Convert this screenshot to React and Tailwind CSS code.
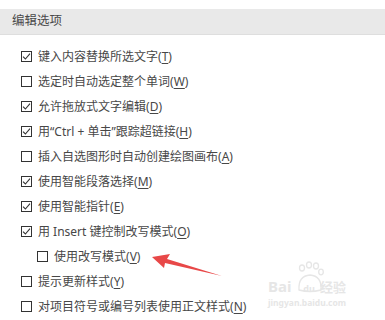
import React from "react";

const Check = ({ checked }) => (
  <span className="w-[11px] h-[11px] border border-[#333] bg-white flex-none flex items-center justify-center">
    {checked && (
      <svg width="9" height="9" viewBox="0 0 9 9">
        <path d="M1 4.6 L3.4 7 L8 1.6" fill="none" stroke="#333" strokeWidth="1.1" />
      </svg>
    )}
  </span>
);

const rows = [
  { c: true, t: "键入内容替换所选文字", k: "T" },
  { c: false, t: "选定时自动选定整个单词", k: "W" },
  { c: true, t: "允许拖放式文字编辑", k: "D" },
  { c: true, t: "用“Ctrl + 单击”跟踪超链接", k: "H" },
  { c: false, t: "插入自选图形时自动创建绘图画布", k: "A" },
  { c: true, t: "使用智能段落选择", k: "M" },
  { c: true, t: "使用智能指针", k: "E" },
  { c: true, t: "用 Insert 键控制改写模式", k: "O" },
  { c: false, t: "使用改写模式", k: "V", indent: true },
  { c: false, t: "提示更新样式", k: "Y" },
  { c: false, t: "对项目符号或编号列表使用正文样式", k: "N" },
];

export default function App() {
  return (
    <div
      className="relative w-[385px] h-[320px] bg-white overflow-hidden text-[#474747]"
      style={{ fontFamily: '"Noto Sans", "Noto Sans CJK SC", sans-serif' }}
    >
      <div className="h-[9px]" />
      <div className="h-[26px] bg-[#e9e9e9] border-b border-[#dedede] flex items-center pl-[12px] text-[12.5px] text-[#4a4a4a]">
        编辑选项
      </div>
      <div className="pt-[9px]">
        {rows.map((r, i) => (
          <div
            key={i}
            className={
              "h-[25px] flex items-center gap-[6px] text-[12px] leading-none " +
              (r.indent ? "pl-[37px]" : "pl-[21px]")
            }
          >
            <Check checked={r.c} />
            <span className="whitespace-pre">
              {r.t}(<span className="underline underline-offset-2">{r.k}</span>)
            </span>
          </div>
        ))}
      </div>

      <svg className="absolute left-0 top-0" width="385" height="320" viewBox="0 0 385 320">
        <polygon points="152,257 170,254 167,259 222,276 165,263 164,268" fill="#e84848" />
        <g fill="none" stroke="#e6e6e6" strokeWidth="1.3">
          <ellipse cx="302" cy="268" rx="2.5" ry="3" />
          <ellipse cx="309" cy="265" rx="2.5" ry="3" />
          <ellipse cx="316" cy="266" rx="2.5" ry="3" />
          <ellipse cx="321" cy="272" rx="2.3" ry="2.8" />
          <path d="M299 290 Q298 276 310 275 Q322 276 321 290 Q310 293 299 290Z" />
        </g>
      </svg>

      <div className="absolute left-[268px] top-[280px] w-[90px] h-[14px] flex items-end text-[#e6e6e6] font-bold leading-none">
        <span className="text-[15px] w-[30px]">Bai</span>
        <span className="text-[9px] w-[22px] text-center pb-[1px]">du</span>
        <span className="text-[13px]">经验</span>
      </div>
      <div className="absolute left-[268px] top-[299px] text-[8.5px] text-[#e6e6e6] font-bold leading-none">
        jingyan.baidu.com
      </div>
    </div>
  );
}
